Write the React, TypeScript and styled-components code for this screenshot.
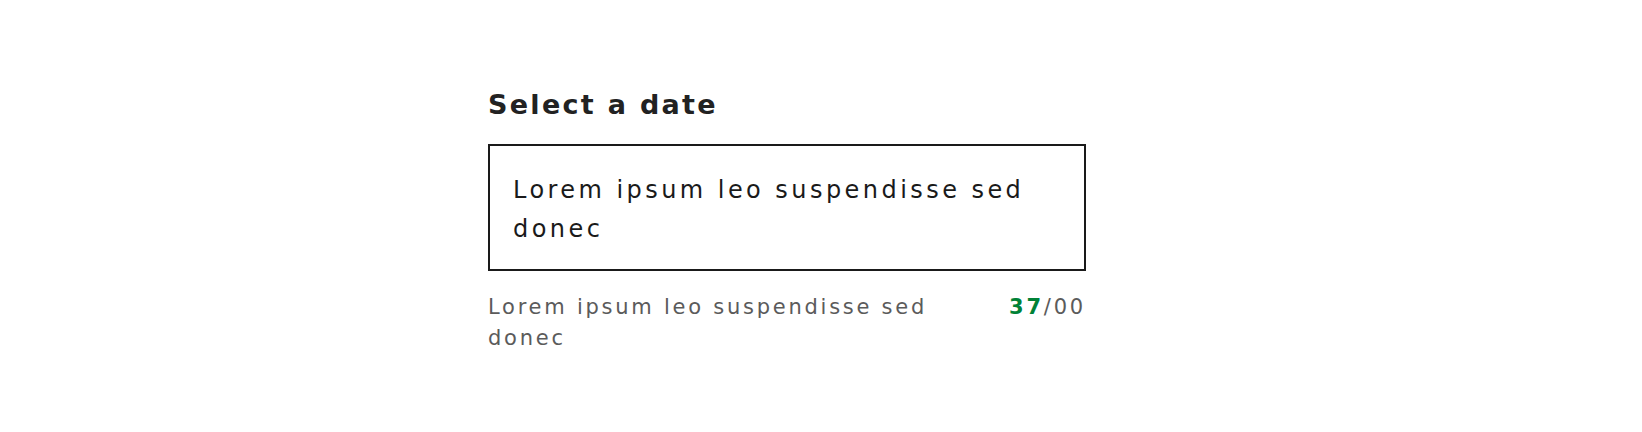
import React from "react";
import styled, { createGlobalStyle } from "styled-components";

const GlobalStyle = createGlobalStyle`
  html, body {
    margin: 0;
    padding: 0;
    background: #ffffff;
  }
  body {
    font-family: "DejaVu Sans", "Liberation Sans", sans-serif;
  }
`;

const Page = styled.div`
  width: 1642px;
  height: 432px;
  box-sizing: border-box;
  padding: 89px 0 0 488px;
`;

const Field = styled.div`
  width: 598px;
  display: flex;
  flex-direction: column;
`;

const Label = styled.label`
  font-size: 27px;
  font-weight: 700;
  letter-spacing: 2.3px;
  line-height: 32px;
  color: #222222;
  margin-bottom: 23px;
`;

const TextArea = styled.textarea`
  width: 100%;
  height: 127px;
  box-sizing: border-box;
  border: 2px solid #1a1a1a;
  border-radius: 0;
  padding: 25px 23px 0;
  margin: 0;
  resize: none;
  overflow: hidden;
  font-family: "DejaVu Sans", "Liberation Sans", sans-serif;
  font-size: 24px;
  letter-spacing: 3.45px;
  line-height: 39px;
  color: #1a1a1a;
  background: #fff;
  outline: none;
`;

const HelperRow = styled.div`
  display: flex;
  justify-content: space-between;
  gap: 24px;
  margin-top: 21px;
`;

const Helper = styled.p`
  flex: 1;
  margin: 0;
  font-size: 21px;
  letter-spacing: 2.75px;
  line-height: 31px;
  color: #5b5b5b;
`;

const Counter = styled.span`
  flex-shrink: 0;
  font-size: 21px;
  letter-spacing: 2.8px;
  line-height: 31px;
  color: #5b5b5b;
`;

const Count = styled.strong`
  font-weight: 700;
  color: #008237;
`;

export default function App() {
  const text = "Lorem ipsum leo suspendisse sed donec";
  return (
    <>
      <GlobalStyle />
      <Page>
        <Field>
          <Label htmlFor="date">Select a date</Label>
          <TextArea id="date" defaultValue={text} />
          <HelperRow>
            <Helper>Lorem ipsum leo suspendisse sed donec</Helper>
            <Counter>
              <Count>{text.length}</Count>/00
            </Counter>
          </HelperRow>
        </Field>
      </Page>
    </>
  );
}
